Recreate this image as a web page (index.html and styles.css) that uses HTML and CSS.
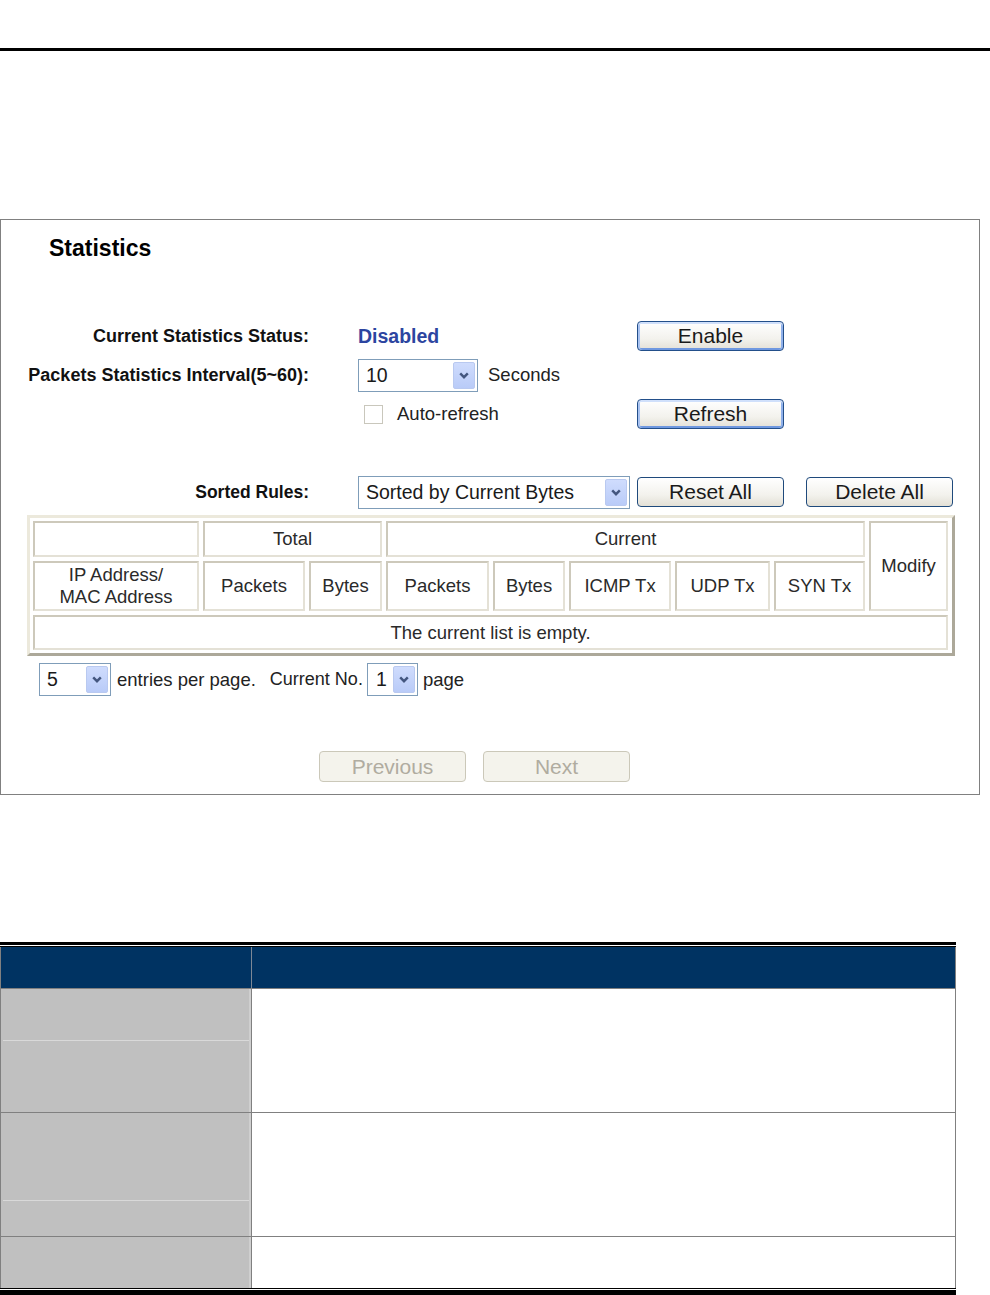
FILE: index.html
```html
<!DOCTYPE html>
<html>
<head>
<meta charset="utf-8">
<link rel="stylesheet" href="styles.css">
</head>
<body>
<div class="rule-top"></div>

<section class="shot">
  <h1 class="title">Statistics</h1>

  <div class="form">
    <div class="row">
      <div class="lbl">Current Statistics Status:</div>
      <div class="val"><span class="status">Disabled</span></div>
      <button class="btn btn-hi">Enable</button>
    </div>
    <div class="row">
      <div class="lbl">Packets Statistics Interval(5~60):</div>
      <div class="val">
        <div class="sel sel-int"><span class="sel-txt">10</span><span class="arr"><svg viewBox="0 0 10 7" width="10" height="7"><path d="M1.2 1.3 L5 5.2 L8.8 1.3" fill="none" stroke="#43567f" stroke-width="2.4"/></svg></span></div>
        <span class="unit">Seconds</span>
      </div>
    </div>
    <div class="row">
      <div class="lbl"></div>
      <div class="val"><span class="chk"></span><span class="chk-lbl">Auto-refresh</span></div>
      <button class="btn btn-hi">Refresh</button>
    </div>
    <div class="row row-sort">
      <div class="lbl">Sorted Rules:</div>
      <div class="val">
        <div class="sel sel-sort"><span class="sel-txt">Sorted by Current Bytes</span><span class="arr"><svg viewBox="0 0 10 7" width="10" height="7"><path d="M1.2 1.3 L5 5.2 L8.8 1.3" fill="none" stroke="#43567f" stroke-width="2.4"/></svg></span></div>
      </div>
      <button class="btn">Reset All</button>
      <button class="btn btn-del">Delete All</button>
    </div>
  </div>

  <div class="tbl-frame">
    <table class="stats">
      <colgroup>
        <col class="c-ip"><col class="c-tp"><col class="c-tb"><col class="c-cp"><col class="c-cb"><col class="c-icmp"><col class="c-udp"><col class="c-syn"><col class="c-mod">
      </colgroup>
      <tr class="h1">
        <td></td>
        <td colspan="2">Total</td>
        <td colspan="5">Current</td>
        <td rowspan="2">Modify</td>
      </tr>
      <tr class="h2">
        <td class="two">IP Address/<br>MAC Address</td>
        <td>Packets</td>
        <td>Bytes</td>
        <td>Packets</td>
        <td>Bytes</td>
        <td>ICMP Tx</td>
        <td>UDP Tx</td>
        <td>SYN Tx</td>
      </tr>
      <tr class="h3">
        <td colspan="9">The current list is empty.</td>
      </tr>
    </table>
  </div>

  <div class="pager">
    <div class="sel sel-n"><span class="sel-txt">5</span><span class="arr"><svg viewBox="0 0 10 7" width="10" height="7"><path d="M1.2 1.3 L5 5.2 L8.8 1.3" fill="none" stroke="#43567f" stroke-width="2.4"/></svg></span></div>
    <span class="pg-a">entries per page.</span>
    <span class="pg-b">Current No.</span>
    <div class="sel sel-p"><span class="sel-txt">1</span><span class="arr"><svg viewBox="0 0 10 7" width="10" height="7"><path d="M1.2 1.3 L5 5.2 L8.8 1.3" fill="none" stroke="#43567f" stroke-width="2.4"/></svg></span></div>
    <span class="pg-c">page</span>
  </div>

  <div class="nav">
    <button class="btn btn-off">Previous</button>
    <button class="btn btn-off btn-next">Next</button>
  </div>
</section>

<div class="desc-rule"></div>
<table class="desc">
  <tr>
    <th class="k"></th>
    <th class="v"></th>
  </tr>
  <tr>
    <td class="k top r1a"></td>
    <td class="v top" rowspan="2"></td>
  </tr>
  <tr>
    <td class="k sub r1b"></td>
  </tr>
  <tr>
    <td class="k top r2a"></td>
    <td class="v top" rowspan="2"></td>
  </tr>
  <tr>
    <td class="k sub r2b"></td>
  </tr>
  <tr>
    <td class="k top r3"></td>
    <td class="v top"></td>
  </tr>
</table>
<div class="desc-bot"></div>
</body>
</html>
```

FILE: styles.css
```css
html, body {
  margin: 0;
  padding: 0;
  background: #fff;
}
body {
  width: 990px;
  font-family: "Liberation Sans", Arial, sans-serif;
  color: #222;
}

.rule-top {
  margin-top: 48px;
  height: 3px;
  background: #000;
}

/* screenshot frame */
.shot {
  margin-top: 168px;
  width: 978px;
  border: 1px solid #808080;
  padding-bottom: 12px;
}
.title {
  margin: 15px 0 0 48px;
  font-size: 23px;
  line-height: 26px;
  font-weight: bold;
  color: #000;
}

.form {
  margin-top: 59px;
}
.row {
  display: flex;
  align-items: center;
  height: 32px;
}
.row + .row {
  margin-top: 7px;
}
.row.row-sort {
  margin-top: 46px;
}
.lbl {
  width: 308px;
  flex: none;
  text-align: right;
  font-size: 18px;
  font-weight: bold;
  color: #111;
}
.row-sort .lbl {
  font-size: 17.5px;
}
.val {
  width: 279px;
  flex: none;
  margin-left: 49px;
  display: flex;
  align-items: center;
  height: 32px;
}
.status {
  font-size: 19.5px;
  font-weight: bold;
  color: #2c45a0;
}
.unit {
  margin-left: 10px;
  font-size: 18.5px;
  color: #222;
}

.chk {
  width: 17px;
  height: 17px;
  border: 1px solid #c9c7bc;
  background: #fff;
  margin-left: 6px;
  flex: none;
}
.chk-lbl {
  margin-left: 14px;
  font-size: 18.5px;
  color: #222;
}

/* select boxes */
.sel {
  box-sizing: border-box;
  height: 33px;
  border: 1px solid #7f9db9;
  background: #fff;
  display: flex;
  align-items: center;
  justify-content: space-between;
  padding: 2px 2px 2px 7px;
  flex: none;
}
.sel-txt {
  font-size: 19.5px;
  color: #1a1a1a;
  white-space: nowrap;
}
.arr {
  box-sizing: border-box;
  width: 22px;
  height: 27px;
  border: 1px solid #b9c9f0;
  border-radius: 2px;
  background: linear-gradient(#cfdcfd, #b9cbf8);
  display: flex;
  align-items: center;
  justify-content: center;
}
.sel-int { width: 120px; }
.sel-sort { width: 272px; }
.sel-n { width: 72px; }
.sel-p { width: 51px; padding-left: 8px; }

/* buttons */
.btn {
  box-sizing: border-box;
  width: 147px;
  height: 30px;
  flex: none;
  padding: 0;
  border: 1px solid #1f4a7c;
  border-radius: 4px;
  background: linear-gradient(#ffffff, #f3f2ed 60%, #e3e0d6);
  font-family: "Liberation Sans", Arial, sans-serif;
  font-size: 21px;
  color: #1a1a1a;
  line-height: 26px;
}
.btn-hi {
  border-color: #234f8a;
  box-shadow: inset 0 2px 0 #d0e0fb, inset 2px 0 0 #a9c3f1, inset -2px 0 0 #8fb0ea, inset 0 -2px 0 #6f98e0;
}
.btn-del {
  margin-left: 22px;
}
.btn-off {
  height: 31px;
  border-color: #cbc8b9;
  background: #f4f3ec;
  color: #b0aca0;
}
.btn-next {
  margin-left: 17px;
}

/* stats table */
.tbl-frame {
  box-sizing: border-box;
  width: 928px;
  margin: 7px 0 0 26px;
  border: 3px solid;
  border-color: #ece9dc #aca899 #aca899 #ece9dc;
}
.stats {
  width: calc(100% + 1px);
  margin: -1px 0 -1px -1px;
  border-spacing: 4px;
  table-layout: fixed;
}
.c-ip { width: 166px; }
.c-tp { width: 102px; }
.c-tb { width: 73px; }
.c-cp { width: 103px; }
.c-cb { width: 72px; }
.c-icmp { width: 102px; }
.c-udp { width: 95px; }
.c-syn { width: 91px; }
.c-mod { width: 79px; }
.stats td {
  box-sizing: border-box;
  padding: 0;
  border: 2px solid;
  border-color: #cdc9bb #e4e1d6 #e4e1d6 #cdc9bb;
  text-align: center;
  vertical-align: middle;
  font-size: 18.5px;
  color: #2a2a2a;
  line-height: 22px;
}
.stats .h1 td { height: 36px; }
.stats .h2 td { height: 50px; }
.stats .h3 td { height: 35px; }

/* pager */
.pager {
  margin: 7px 0 0 38px;
  display: flex;
  align-items: center;
  height: 33px;
  font-size: 18.5px;
  color: #222;
}
.pg-a { margin-left: 6px; }
.pg-b { margin-left: 14px; font-size: 18px; }
.pager .sel-p { margin-left: 4px; }
.pg-c { margin-left: 5px; }

.nav {
  margin: 55px 0 0 318px;
  display: flex;
}

/* description table */
.desc-rule {
  margin-top: 147px;
  width: 956px;
  height: 1px;
  border-top: 3px solid #000;
  border-bottom: 1px solid #000;
}
.desc {
  width: 956px;
  border-spacing: 0;
  border-left: 1px solid #808080;
  border-right: 1px solid #808080;
}
.desc th, .desc td {
  box-sizing: border-box;
  padding: 0;
}
.desc th {
  height: 41px;
  background: #003362;
}
.desc th.k {
  width: 251px;
  border-right: 1px solid #7d8896;
}
.desc td.top {
  border-top: 1px solid #808080;
}
.desc td.k {
  width: 251px;
  background: #c0c0c0;
  border-right: 1px solid #808080;
  box-shadow: inset -2px 0 0 #cfcfcf;
}
.desc td.sub {
  background: linear-gradient(#d9d9d9, #d9d9d9) no-repeat 2px 0 / 246px 1px, #c0c0c0;
}
.desc td.v {
  background: #fff;
}
.r1a { height: 52px; }
.r1b { height: 72px; }
.r2a { height: 88px; }
.r2b { height: 36px; }
.r3 { height: 52px; }

.desc-bot {
  width: 956px;
  height: 1px;
  border-top: 1px solid #000;
  border-bottom: 5px solid #000;
}
```
